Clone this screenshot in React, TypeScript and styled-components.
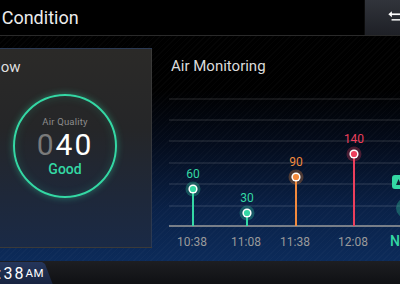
import styled, { createGlobalStyle } from "styled-components";

const GlobalStyle = createGlobalStyle`
  html, body {
    margin: 0;
    padding: 0;
    background: #000;
  }
  body {
    font-family: Roboto, "Liberation Sans", sans-serif;
  }
`;

const GREEN = "#34d8a4";
const ORANGE = "#f28a3d";
const RED = "#ec3f5c";

const Screen = styled.div`
  width: 400px;
  height: 284px;
  overflow: hidden;
  display: flex;
  flex-direction: column;
  background: #000;
  color: #e6e6e6;
`;

const Header = styled.header`
  height: 35px;
  flex: none;
  display: flex;
  align-items: stretch;
  border-bottom: 1px solid #2a2a2a;
`;

const Title = styled.h1`
  flex: 1;
  margin: 0 0 0 -25px;
  font-size: 18px;
  font-weight: 400;
  line-height: 35px;
  color: #ececec;
  white-space: nowrap;
`;

const SwapButton = styled.button`
  width: 36px;
  flex: none;
  padding: 0 0 0 22px;
  border: none;
  border-left: 1px solid #0c0c0c;
  background: linear-gradient(180deg, #31343b 0%, #1e2026 100%);
  display: flex;
  align-items: flex-start;
  overflow: hidden;
  cursor: pointer;
`;

const Main = styled.main`
  flex: 1;
  display: flex;
  gap: 17px;
  padding: 12px 0 13px;
  background:
    repeating-linear-gradient(-45deg, rgba(255, 255, 255, 0.018) 0 1px, transparent 1px 4px),
    linear-gradient(180deg, #000 0%, #000 24%, #040c1c 48%, #0a2249 78%, #0c2b5a 100%);
`;

const Card = styled.section`
  width: 174px;
  margin-left: -22px;
  flex: none;
  box-sizing: border-box;
  padding: 9px 18px 0 11px;
  display: flex;
  flex-direction: column;
  align-items: center;
  border: 1px solid rgba(255, 255, 255, 0.08);
  background: linear-gradient(180deg, #2b2a28 0%, #252628 40%, #1e283a 75%, #1a2a46 100%);
`;

const CardLabel = styled.h2`
  align-self: flex-start;
  margin: 0;
  font-size: 15px;
  font-weight: 400;
  line-height: 18px;
  color: #dedede;
`;

const Gauge = styled.div`
  width: 104px;
  height: 104px;
  margin: 18px 0 0 7px;
  box-sizing: border-box;
  border-radius: 50%;
  border: 2px solid ${GREEN};
  box-shadow: 0 0 7px rgba(52, 216, 164, 0.45), inset 0 0 10px rgba(52, 216, 164, 0.18);
  display: flex;
  flex-direction: column;
  align-items: center;
  justify-content: center;
`;

const GaugeCaption = styled.span`
  font-size: 9.5px;
  line-height: 12px;
  letter-spacing: 0.2px;
  color: #8c8c8c;
`;

const GaugeValue = styled.span`
  margin-top: 3px;
  font-size: 30px;
  line-height: 28px;
  letter-spacing: 2px;
  color: #fff;
`;

const LeadZero = styled.span`
  color: #7a7a7a;
`;

const GaugeStatus = styled.span`
  margin-top: 2px;
  font-size: 14px;
  font-weight: 500;
  line-height: 16px;
  color: ${GREEN};
`;

const Monitor = styled.section`
  flex: 1;
  min-width: 0;
  display: flex;
  flex-direction: column;
`;

const MonitorTitle = styled.h2`
  margin: 0;
  padding: 9px 0 0 2px;
  font-size: 15px;
  font-weight: 400;
  line-height: 18px;
  color: #dcdcdc;
`;

const Chart = styled.svg`
  display: block;
  flex: none;
  margin-top: 15px;
  overflow: visible;
  font-family: Roboto, "Liberation Sans", sans-serif;
`;

const Footer = styled.footer`
  height: 24px;
  flex: none;
  display: flex;
  align-items: flex-end;
  background: linear-gradient(180deg, #1d1e22 0%, #0f1013 100%);
`;

const ClockTab = styled.div`
  width: 53px;
  height: 23px;
  padding-right: 9px;
  box-sizing: border-box;
  display: flex;
  justify-content: flex-end;
  align-items: center;
  overflow: hidden;
  white-space: nowrap;
  background: linear-gradient(180deg, #25365c 0%, #17233e 100%);
  clip-path: polygon(0 0, 42px 0, 45px 2px, 53px 100%, 0 100%);
  color: #fff;
  line-height: 23px;
`;

const ClockTime = styled.span`
  font-size: 16px;
  letter-spacing: 2px;
`;

const ClockMeridiem = styled.span`
  font-size: 11.5px;
  letter-spacing: 0.5px;
`;

type Reading = { time: string; value: number; x: number; y: number; color: string };

const readings: Reading[] = [
  { time: "10:38", value: 60, x: 24, y: 99, color: GREEN },
  { time: "11:08", value: 30, x: 78, y: 123, color: GREEN },
  { time: "11:38", value: 90, x: 127, y: 87, color: ORANGE },
  { time: "12:08", value: 140, x: 185, y: 64, color: RED },
];

const gridLines = [9, 30, 51, 73, 94, 116];
const BASE_Y = 136;

function SwapIcon() {
  return (
    <svg width="20" height="35" viewBox="0 0 20 35">
      <polygon points="2,12.5 7.5,8 7.5,17" fill="#fff" />
      <rect x="6" y="11.2" width="14" height="2.6" fill="#fff" />
      <rect x="7" y="20" width="13" height="2.2" fill="#fff" />
    </svg>
  );
}

function AirChart() {
  return (
    <Chart width={240} height={158} viewBox="0 0 240 158">
      {gridLines.map((y) => (
        <line key={y} x1={0} x2={240} y1={y} y2={y} stroke="rgba(255,255,255,0.17)" strokeWidth={1} />
      ))}
      <line x1={0} x2={240} y1={BASE_Y} y2={BASE_Y} stroke="#9c9c9c" strokeWidth={1.5} />

      {readings.map((r) => (
        <g key={r.time}>
          <line x1={r.x} x2={r.x} y1={r.y} y2={BASE_Y} stroke={r.color} strokeWidth={2} />
          <circle cx={r.x} cy={r.y} r={7.5} fill={r.color} fillOpacity={0.3} />
          <circle cx={r.x} cy={r.y} r={4.6} fill="#fff" />
          <circle cx={r.x} cy={r.y} r={3.1} fill={r.color} />
          <text x={r.x} y={r.y - 11} textAnchor="middle" fontSize={12} fill={r.color}>
            {r.value}
          </text>
          <text x={r.x - 1} y={156} textAnchor="middle" fontSize={12} fill="#9a9a9a">
            {r.time}
          </text>
        </g>
      ))}

      <circle cx={237} cy={118} r={10} fill={GREEN} fillOpacity={0.32} />
      <rect x={223} y={85} width={22} height={14} rx={3} fill={GREEN} />
      <path d="M227 95 L229.5 89 L232 95 Z" fill="#123" />
      <text x={221} y={156} fontSize={14} fontWeight={500} fill={GREEN}>
        Now
      </text>
    </Chart>
  );
}

export default function App() {
  return (
    <>
      <GlobalStyle />
      <Screen>
        <Header>
          <Title>Air Condition</Title>
          <SwapButton aria-label="Switch view">
            <SwapIcon />
          </SwapButton>
        </Header>

        <Main>
          <Card>
            <CardLabel>Now</CardLabel>
            <Gauge>
              <GaugeCaption>Air Quality</GaugeCaption>
              <GaugeValue>
                <LeadZero>0</LeadZero>40
              </GaugeValue>
              <GaugeStatus>Good</GaugeStatus>
            </Gauge>
          </Card>

          <Monitor>
            <MonitorTitle>Air Monitoring</MonitorTitle>
            <AirChart />
          </Monitor>
        </Main>

        <Footer>
          <ClockTab>
            <ClockTime>10:38</ClockTime>
            <ClockMeridiem>AM</ClockMeridiem>
          </ClockTab>
        </Footer>
      </Screen>
    </>
  );
}
